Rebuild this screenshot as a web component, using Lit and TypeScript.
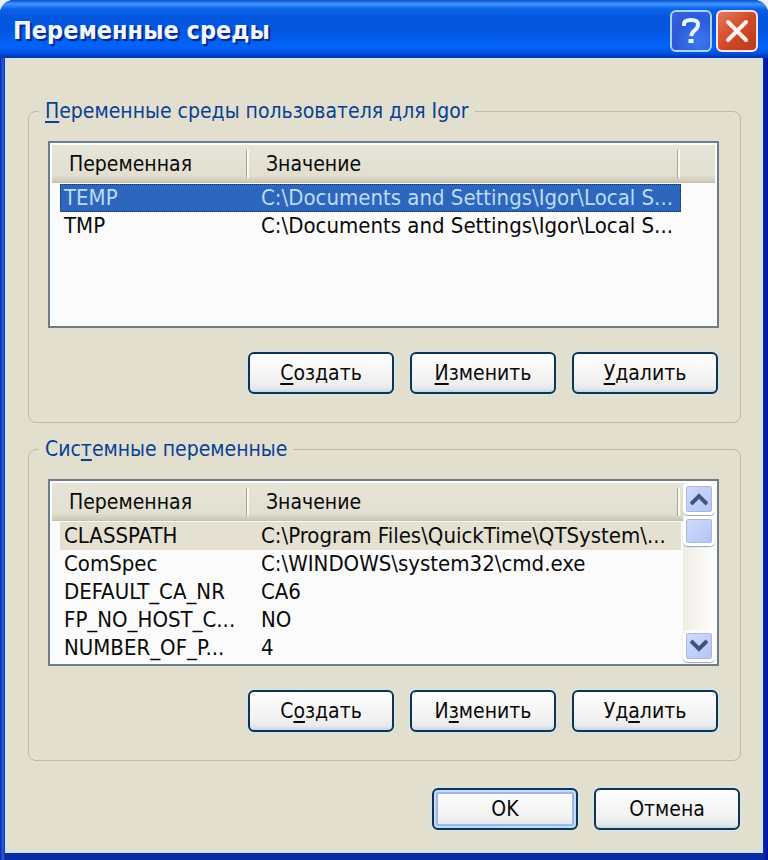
import { LitElement, html, css, nothing } from "lit";
import { customElement, property, state } from "lit/decorators.js";
import { classMap } from "lit/directives/class-map.js";

interface Variable {
  name: string;
  value: string;
}

const base = css`
  :host {
    font-family: "DejaVu Sans Condensed", "DejaVu Sans", sans-serif;
    font-size: 21px;
    line-height: 28px;
    color: #0a0a0a;
  }
  *,
  *::before,
  *::after {
    box-sizing: border-box;
  }
  button {
    font: inherit;
    color: inherit;
    margin: 0;
    padding: 0;
  }
`;

@customElement("xp-button")
export class XpButton extends LitElement {
  @property() label = "";
  @property({ type: Number }) access = -1;
  @property({ type: Boolean }) primary = false;

  static styles = [
    base,
    css`
      :host {
        display: block;
        flex: 0 1 146px;
      }
      .button {
        display: block;
        width: 100%;
        height: 42px;
        border: 2px solid #0f3350;
        border-radius: 6px;
        background: linear-gradient(#ffffff, #f2f1f1 70%, #e6e9ec 90%, #c4d8e6);
        box-shadow: 0 0 3px 1px #d0e8ee;
      }
      .primary {
        box-shadow: inset 0 0 0 2px #c3daf8, inset 0 0 0 4px #9db9ea, 0 0 3px 1px #d0e8ee;
      }
      .key {
        text-decoration: underline;
        text-decoration-thickness: 2px;
        text-underline-offset: 3px;
      }
    `,
  ];

  render() {
    const i = this.access;
    const text =
      i < 0
        ? this.label
        : html`${this.label.slice(0, i)}<span class="key">${this.label[i]}</span>${this.label.slice(i + 1)}`;
    return html`<button class=${classMap({ button: true, primary: this.primary })} type="button">${text}</button>`;
  }
}

@customElement("variable-list")
export class VariableList extends LitElement {
  @property({ attribute: false }) rows: Variable[] = [];
  @property() label = "";
  @property({ type: Number }) current = 0;
  @property({ type: Boolean }) active = false;
  @property({ type: Boolean }) scrollable = false;

  static styles = [
    base,
    css`
      :host {
        display: block;
      }
      .list {
        display: flex;
        height: 187px;
        padding: 2px;
        border: 2px solid #6f7d88;
        background: #fbfbfb;
        overflow: hidden;
      }
      .table {
        display: block;
        flex: 1;
        min-width: 0;
      }
      .head,
      .body {
        display: block;
      }
      .head-row {
        display: grid;
        grid-template-columns: 197px 1fr 35px;
        height: 38px;
        padding: 5px 0 6px;
        background: linear-gradient(#e6e5d8, #e2dfd0 80%, #cbc8b8 98%, #b9b5a3);
        margin-bottom: 1px;
      }
      .compact {
        grid-template-columns: 197px 1fr 3px;
      }
      .head-cell {
        padding: 0 0 0 17px;
        text-align: left;
        font-weight: normal;
        border-right: 2px solid #f8f7f0;
        box-shadow: inset -1px 0 #aaa796;
      }
      .body {
        margin: 0 34px 0 8px;
        font-size: 22px;
      }
      .tight {
        margin-right: 2px;
      }
      .row {
        display: grid;
        grid-template-columns: 197px 1fr;
        height: 28px;
      }
      .cell {
        padding: 0 4px;
        white-space: nowrap;
        overflow: hidden;
      }
      .current {
        background: #e4e0d2;
      }
      .focused {
        background: #2f66bd;
        color: #b9dcf7;
        outline: 1px dotted #16305c;
        outline-offset: -1px;
      }
      .scroll {
        flex: 0 0 32px;
        display: flex;
        flex-direction: column;
        background: linear-gradient(90deg, #efede6, #fdfdfb);
      }
      .piece {
        height: 32px;
        width: 32px;
        display: grid;
        place-items: center;
        border: 3px solid #ffffff;
        border-radius: 5px;
        background: linear-gradient(135deg, #d0dbfc, #b4c5f4);
        box-shadow: inset 0 0 0 1px #a9b9e6, 0 1px 1px #8fa3b8;
      }
      .thumb {
        flex: none;
        height: 30px;
        margin-top: 1px;
      }
      .track {
        flex: 1;
      }
    `,
  ];

  private arrow(d: string) {
    return html`<svg width="18" height="14" viewBox="0 0 18 14" fill="none" stroke="#3f547f" stroke-width="4">
      <path d=${d} />
    </svg>`;
  }

  render() {
    return html`<div class="list">
      <table class="table" aria-label=${this.label}>
        <thead class="head">
          <tr class=${classMap({ "head-row": true, compact: this.scrollable })}>
            <th class="head-cell" scope="col">Переменная</th>
            <th class="head-cell" scope="col">Значение</th>
          </tr>
        </thead>
        <tbody class=${classMap({ body: true, tight: this.scrollable })}>
          ${this.rows.map(
            (row, i) => html`<tr
              class=${classMap({
                row: true,
                current: i === this.current && !this.active,
                focused: i === this.current && this.active,
              })}
            >
              <td class="cell">${row.name}</td>
              <td class="cell">${row.value}</td>
            </tr>`,
          )}
        </tbody>
      </table>
      ${this.scrollable
        ? html`<div class="scroll">
            <button class="piece" type="button" aria-label="Вверх">${this.arrow("M1 12 9 4 17 12")}</button>
            <div class="piece thumb"></div>
            <div class="track"></div>
            <button class="piece" type="button" aria-label="Вниз">${this.arrow("M1 2 9 10 17 2")}</button>
          </div>`
        : nothing}
    </div>`;
  }
}

@customElement("app-root")
export class AppRoot extends LitElement {
  @state() private userVars: Variable[] = [
    { name: "TEMP", value: "C:\\Documents and Settings\\Igor\\Local S..." },
    { name: "TMP", value: "C:\\Documents and Settings\\Igor\\Local S..." },
  ];

  @state() private systemVars: Variable[] = [
    { name: "CLASSPATH", value: "C:\\Program Files\\QuickTime\\QTSystem\\..." },
    { name: "ComSpec", value: "C:\\WINDOWS\\system32\\cmd.exe" },
    { name: "DEFAULT_CA_NR", value: "CA6" },
    { name: "FP_NO_HOST_C...", value: "NO" },
    { name: "NUMBER_OF_P...", value: "4" },
  ];

  static styles = [
    base,
    css`
      :host {
        display: block;
        background: #e8eef8;
      }
      .window {
        display: flex;
        flex-direction: column;
        min-height: 100vh;
        padding: 0 5px 7px;
        border-radius: 14px 14px 0 0;
        background: linear-gradient(90deg, #0a22b0, #2a62dc 3px, #0a2ca8 5px, #0a2ca8 calc(100% - 5px), #0420b0 calc(100% - 3px), #00108c);
        overflow: hidden;
      }
      .titlebar {
        display: flex;
        align-items: center;
        gap: 4px;
        height: 58px;
        margin: 0 -5px;
        padding: 4px 10px 0 13px;
        background: linear-gradient(#0a50d0, #3f95ff 4px, #0c62e8 9px, #0455dc 18px, #0456e2 30px, #0463fa 46px, #0458ea 52px, #0238b4 57px);
      }
      .title {
        flex: 1;
        margin: 0;
        font-size: 25px;
        line-height: 32px;
        font-weight: bold;
        color: #f2f8ff;
        text-shadow: 2px 2px 1px #06268a;
      }
      .caption {
        display: grid;
        place-items: center;
        width: 42px;
        height: 42px;
        border: 2px solid #a4d4ff;
        border-radius: 6px;
        background: radial-gradient(circle at 70% 80%, #3c78f0, #2c5ad8 60%, #3a66d4);
      }
      .close {
        border-color: #ffe6e4;
        background: linear-gradient(135deg, #e07a5c, #d2492a 50%, #b83c1c);
      }
      .client {
        flex: 1;
        padding: 38px 20px 20px 21px;
        border: 2px solid #c9e6f2;
        border-top-width: 1px;
        background: #e2dfce;
      }
      .group {
        min-width: 0;
        margin: 0 0 12px;
        padding: 16px 21px 28px 19px;
        border: 1px solid #bdb9a8;
        border-radius: 8px;
      }
      .legend {
        margin-left: -9px;
        padding: 0 6px;
        color: #0a3f94;
      }
      .key {
        text-decoration: underline;
        text-decoration-thickness: 2px;
        text-underline-offset: 3px;
      }
      .actions {
        display: flex;
        justify-content: flex-end;
        gap: 16px;
        padding: 24px 1px 0 0;
      }
      .dialog-actions {
        padding-top: 15px;
      }
    `,
  ];

  render() {
    return html`<main class="window">
      <header class="titlebar">
        <h1 class="title">Переменные среды</h1>
        <button class="caption" type="button" aria-label="Справка">
          <svg width="24" height="30" viewBox="0 0 24 30" fill="none" stroke="#eaf5ff" stroke-width="4">
            <path d="M5 10V8Q5 4 12 4T19 8Q19 12 16 14T12 20" />
            <path d="M12 23v4" stroke-width="5" />
          </svg>
        </button>
        <button class="caption close" type="button" aria-label="Закрыть">
          <svg width="26" height="26" viewBox="0 0 26 26" fill="none" stroke="#fff4ec" stroke-width="4" stroke-linecap="round">
            <path d="M4 4 22 22M22 4 4 22" />
          </svg>
        </button>
      </header>
      <div class="client">
        <fieldset class="group">
          <legend class="legend"><span class="key">П</span>еременные среды пользователя для Igor</legend>
          <variable-list label="Переменные среды пользователя" .rows=${this.userVars} active></variable-list>
          <div class="actions">
            <xp-button label="Создать" access="0"></xp-button>
            <xp-button label="Изменить" access="0"></xp-button>
            <xp-button label="Удалить" access="0"></xp-button>
          </div>
        </fieldset>
        <fieldset class="group">
          <legend class="legend">Сис<span class="key">т</span>емные переменные</legend>
          <variable-list label="Системные переменные" .rows=${this.systemVars} scrollable></variable-list>
          <div class="actions">
            <xp-button label="Создать" access="1"></xp-button>
            <xp-button label="Изменить" access="1"></xp-button>
            <xp-button label="Удалить" access="2"></xp-button>
          </div>
        </fieldset>
        <div class="actions dialog-actions">
          <xp-button label="OK" primary></xp-button>
          <xp-button label="Отмена"></xp-button>
        </div>
      </div>
    </main>`;
  }
}
